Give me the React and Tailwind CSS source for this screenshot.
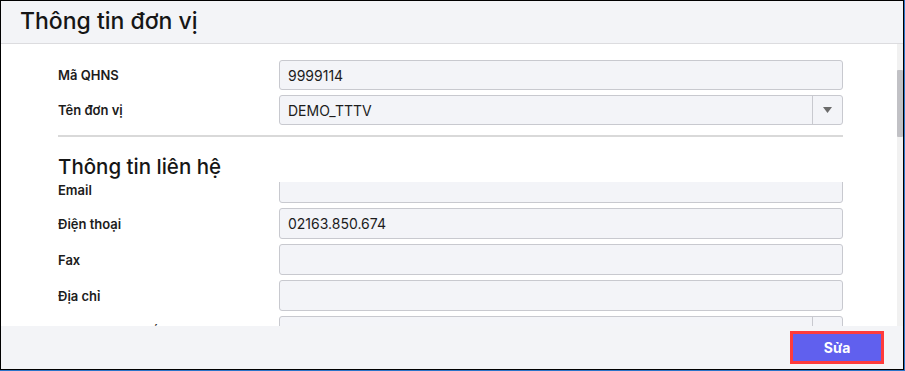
import React from 'react';

const font = { fontFamily: 'Inter, "Noto Sans", sans-serif' };

const Arrow = () => (
  <div className="w-[30px] h-full border-l border-[#c8c9cf] flex items-center justify-center">
    <svg width="9" height="6" viewBox="0 0 9 6">
      <path d="M0 0h9L4.5 6z" fill="#6b6b6b" />
    </svg>
  </div>
);

const Field = ({ label, value, select, h = 'h-[31px]', lp = '' }) => (
  <div className={`flex items-center ${h}`}>
    <label className={`w-[221px] shrink-0 text-[13px] leading-[14px] font-semibold text-[#1c1c1c] ${lp}`}>{label}</label>
    <div className="flex-1 h-full flex items-center bg-[#f3f4f8] border border-[#c8c9cf] rounded-[3px]">
      <span className="flex-1 pl-[8px] text-[14px] text-[#1c1c1c]">{value}</span>
      {select && <Arrow />}
    </div>
  </div>
);

export default function App() {
  return (
    <div className="w-[905px] h-[371px] bg-white border-r border-b border-[#2a74c9]" style={font}>
      <div className="h-full flex flex-col border border-black">
        <header className="h-[43px] shrink-0 bg-[#f3f4f7] border-b border-[#dcdcdf] flex items-center pl-[19px]">
          <h2 className="text-[23px] font-medium text-[#161616] leading-none pb-[2px]">Thông tin đơn vị</h2>
        </header>

        <div className="flex-1 flex min-h-0">
          <main className="flex-1 flex flex-col pl-[57px] pr-[54px] pt-[16px] min-h-0">
            <div className="flex flex-col gap-[5px]">
              <Field label="Mã QHNS" value="9999114" h="h-[30px]" />
              <Field label="Tên đơn vị" value="DEMO_TTTV" select h="h-[30px]" />
            </div>
            <div className="mt-[10px] h-[2px] bg-[#d9d9d9]" />
            <h3 className="mt-[16px] h-[29px] text-[20.5px] font-medium text-[#161616] leading-[28px]">Thông tin liên hệ</h3>
            <div className="flex-1 overflow-hidden min-h-0">
              <div className="-mt-[10px] flex flex-col gap-[5px]">
                <Field label="Email" value="" lp="pt-[4px]" />
                <Field label="Điện thoại" value="02163.850.674" />
                <Field label="Fax" value="" />
                <Field label="Địa chỉ" value="" />
                <Field label="Tỉnh/Thành phố" value="Tỉnh Yên Bái" select />
              </div>
            </div>
          </main>
          <div className="w-[6px] shrink-0 bg-[#f1f1f1]">
            <div className="mt-[26px] h-[67px] bg-[#c1c1c5] rounded-[1px]" />
          </div>
        </div>

        <footer className="h-[43px] shrink-0 bg-[#f3f4f7] flex items-center justify-end pr-[19px]">
          <div className="border-[3px] border-[#ff3b3b]">
            <button className="w-[88px] h-[27px] bg-[#6060ee] text-white text-[14px] font-bold">Sửa</button>
          </div>
        </footer>
      </div>
    </div>
  );
}
